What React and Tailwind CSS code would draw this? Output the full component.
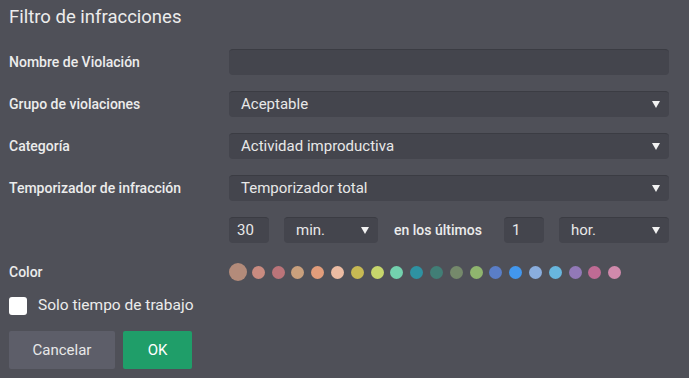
import React, { useState } from "react"

const colors = [
    "#b38b7a", "#c98b80", "#bb7479", "#c9a07d", "#e29d7b", "#ecbca3", "#c7b953",
    "#c7d66c", "#73d1ae", "#2e92a2", "#417e76", "#75896b", "#8fb56e", "#5a7ec7",
    "#4297ee", "#8aaede", "#68b6de", "#9279b7", "#bf6b94", "#d08aac",
]

function Arrow() {
    return (
        <svg width="8" height="7" viewBox="0 0 8 7" className="shrink-0">
            <path d="M0 0 H8 L4 7 Z" fill="#f2f2f2" />
        </svg>
    )
}

function Select({ value, className = "" }) {
    return (
        <div className={`h-[26px] flex items-center justify-between pl-3 pr-[9px] rounded-[4px] bg-[#44454d] border-t border-[#3b3c43] text-[15px] text-[#e8e8e8] ${className}`}>
            <span>{value}</span>
            <Arrow />
        </div>
    )
}

function Field({ value, className = "" }) {
    return (
        <div className={`h-[26px] flex items-center px-2 rounded-[4px] bg-[#44454d] border-t border-[#3b3c43] text-[15px] text-[#e8e8e8] ${className}`}>
            {value}
        </div>
    )
}

function Row({ label, children }) {
    return (
        <div className="h-[26px] flex items-center">
            <div className="w-[220px] shrink-0 text-[14px] font-medium text-[#ececec]">{label}</div>
            {children}
        </div>
    )
}

export default function App() {
    const [selected, setSelected] = useState(0)
    const [onlyWork, setOnlyWork] = useState(false)

    return (
        <div className="w-[689px] h-[378px] bg-[#4f5058] px-[9px] overflow-hidden" style={{ fontFamily: 'Roboto, "Noto Sans", sans-serif' }}>
            <div className="h-[49px] pt-[5px] text-[18.5px] leading-[24px] text-[#ececec]">Filtro de infracciones</div>

            <div className="flex flex-col gap-4">
                <Row label="Nombre de Violación">
                    <Field value="" className="w-[440px]" />
                </Row>
                <Row label="Grupo de violaciones">
                    <Select value="Aceptable" className="w-[440px]" />
                </Row>
                <Row label="Categoría">
                    <Select value="Actividad improductiva" className="w-[440px]" />
                </Row>
                <Row label="Temporizador de infracción">
                    <Select value="Temporizador total" className="w-[440px]" />
                </Row>
                <Row label="">
                    <Field value="30" className="w-[40px]" />
                    <Select value="min." className="w-[94px] ml-[15px]" />
                    <span className="ml-4 w-[110px] text-[14px] font-medium text-[#ececec]">en los últimos</span>
                    <Field value="1" className="w-[40px]" />
                    <Select value="hor." className="w-[110px] ml-[15px]" />
                </Row>
                <Row label="Color">
                    <div className="flex items-center gap-[6.8px]">
                        {colors.map((c, i) =>
                            <div key={c} onClick={() => setSelected(i)}
                                className={`rounded-full cursor-pointer ${i === selected ? "w-[18px] h-[18px] -mr-[2px]" : "w-[13px] h-[13px]"}`}
                                style={{ backgroundColor: c }} />
                        )}
                    </div>
                </Row>
            </div>

            <label className="mt-3 flex items-center gap-[11px] h-[18px] cursor-pointer">
                <span onClick={() => setOnlyWork(!onlyWork)} className="w-[18px] h-[18px] rounded-[3px] bg-white" />
                <span className="text-[15.5px] text-[#ececec]">Solo tiempo de trabajo</span>
            </label>

            <div className="mt-4 flex gap-2">
                <button className="w-[106px] h-[38px] rounded-[2px] bg-[#5d5e69] text-[15px] text-[#e8e8e8]">Cancelar</button>
                <button className="w-[69px] h-[38px] rounded-[2px] bg-[#1f9e69] text-[15px] text-white">OK</button>
            </div>
        </div>
    )
}
